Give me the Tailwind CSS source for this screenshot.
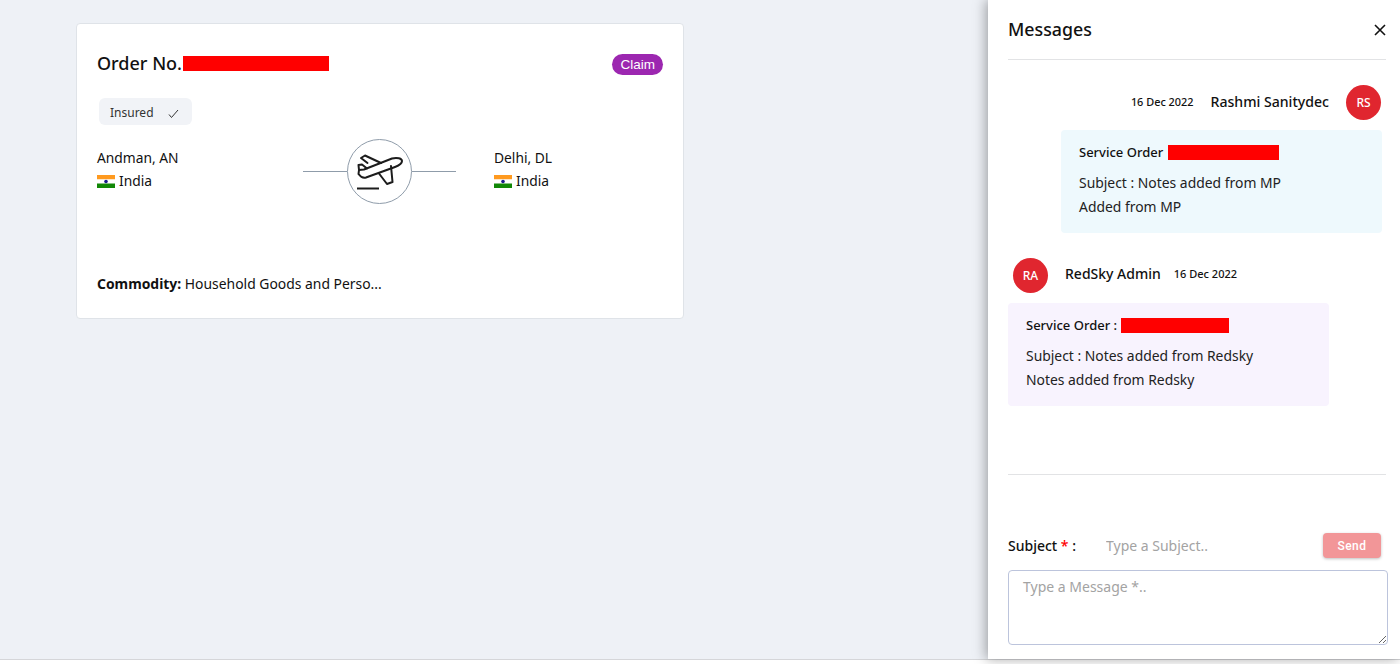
<!DOCTYPE html>
<html lang="en">
<head>
  <meta charset="UTF-8" />
  <meta name="viewport" content="width=device-width, initial-scale=1.0" />
  <title>Order messages</title>
  <script src="https://cdn.jsdelivr.net/npm/@tailwindcss/browser@4"></script>
</head>
<body class="h-[664px] overflow-hidden bg-white font-['Noto_Sans',sans-serif] text-[#111]">
  <div class="h-[660px] flex justify-between bg-[#eef1f6] border-b border-[#d5d6d9]">
    <main class="pl-[76px] pt-[23px]">
      <div class="w-[608px] h-[296px] bg-white border border-[#dfe3e8] rounded pl-5 pr-5 pt-[28px]">
        <div class="flex items-center justify-between h-6">
          <div class="flex items-center mb-[2px]">
            <h2 class="text-[18px] font-medium leading-6">Order No.</h2>
            <span class="w-[146px] h-[15px] bg-[#ff0000] ml-px"></span>
          </div>
          <span class="bg-[#9c27b0] text-white text-[13.5px] leading-[21px] px-[8px] rounded-full font-['Liberation_Sans',sans-serif]">Claim</span>
        </div>
        <div class="mt-[22px] ml-[2px] w-[93px] h-[27px] bg-[#f1f3f7] rounded-md flex items-center pl-[11px] pt-[2px] text-xs text-[#333]">
          Insured
          <svg class="ml-[14px] mt-[2px]" width="11" height="10" viewBox="0 0 11 10" fill="none" stroke="#333" stroke-width="1"><path d="M1 5.5 L3.5 8.5 L10 1"/></svg>
        </div>
        <div class="flex mt-[14px]">
          <div class="w-[206px] text-[13.8px]">
            <div class="h-[20px] leading-5 mt-[9px]">Andman, AN</div>
            <div class="flex items-center mt-[3px] h-5">
              <svg width="18" height="13" viewBox="0 0 18 13"><rect width="18" height="4.5" fill="#ff9a1f"/><rect y="4.5" width="18" height="4" fill="#fff"/><rect y="8.5" width="18" height="4.5" fill="#128807"/><circle cx="9" cy="6.5" r="1.8" fill="#1a1a8c"/></svg>
              <span class="ml-1">India</span>
            </div>
          </div>
          <div class="w-[153px] h-[65px] flex items-center">
            <span class="flex-1 h-px bg-[#8f9caa]"></span>
            <div class="w-[65px] h-[65px] rounded-full border border-[#8f9caa] flex items-center justify-center shrink-0">
              <svg width="49" height="39" viewBox="355 152 49 39" fill="none" stroke="#1c1c1c" stroke-width="2" stroke-linejoin="round" stroke-linecap="round">
                <path d="M359 170 L364 169.5 L392 158.5 C397 157 402 158.5 402 161 C402 163.5 399 165.5 395 167 L366 177.5 C363 178.5 360 176 358.5 174 Z"/>
                <path d="M359 170 L358.5 165 L362 164.5 L367 168.5"/>
                <path d="M367.5 163 L361 158 L365 155.5 L381 163"/>
                <path d="M379 173.5 L387 184 L392.5 182 L391 166"/>
                <path d="M357 188.5 H379" stroke-linecap="butt"/>
              </svg>
            </div>
            <span class="flex-1 h-px bg-[#8f9caa]"></span>
          </div>
          <div class="ml-[38px] text-[13.8px]">
            <div class="h-[20px] leading-5 mt-[9px]">Delhi, DL</div>
            <div class="flex items-center mt-[3px] h-5">
              <svg width="18" height="13" viewBox="0 0 18 13"><rect width="18" height="4.5" fill="#ff9a1f"/><rect y="4.5" width="18" height="4" fill="#fff"/><rect y="8.5" width="18" height="4.5" fill="#128807"/><circle cx="9" cy="6.5" r="1.8" fill="#1a1a8c"/></svg>
              <span class="ml-1">India</span>
            </div>
          </div>
        </div>
        <p class="mt-[70px] text-[13.9px] leading-5"><b class="font-bold">Commodity:</b> Household Goods and Perso...</p>
      </div>
    </main>

    <aside class="w-[412px] h-full bg-white shadow-[-2px_0_12px_rgba(0,0,0,0.35)] pl-5 flex flex-col">
      <div class="w-[405px] flex flex-col">
        <header class="w-[378px] h-[60px] flex items-center justify-between border-b border-[#e2e3e5]">
          <h2 class="text-[17.8px] font-medium mb-[1px]">Messages</h2>
          <svg width="12" height="12" viewBox="0 0 12 12" stroke="#111" stroke-width="1.6"><path d="M1 1 L11 11 M11 1 L1 11"/></svg>
        </header>

        <section class="w-[374px] flex flex-col items-end mt-[25px]">
          <div class="flex items-center h-[35px] pr-[1px]">
            <span class="text-[10.9px] font-medium">16 Dec 2022</span>
            <span class="text-[14.1px] font-medium ml-[17px] mb-[2px]">Rashmi Sanitydec</span>
            <span class="w-[35px] h-[35px] rounded-full bg-[#e0262f] text-white text-xs font-medium flex items-center justify-center ml-[17px]">RS</span>
          </div>
          <div class="w-[321px] h-[103px] bg-[#eef9fd] rounded mt-[10px] pl-[18px] pt-[12px] text-[13.9px] leading-6">
            <div class="flex items-center text-[13px] font-medium h-5">Service Order <span class="w-[111px] h-[15px] bg-[#ff0000] ml-[5px]"></span></div>
            <p class="mt-[9px] text-[#222]">Subject : Notes added from MP</p>
            <p class="text-[#222]">Added from MP</p>
          </div>
        </section>

        <section class="w-[321px] mt-[25px]">
          <div class="flex items-center h-[35px] pl-[5px]">
            <span class="w-[35px] h-[35px] rounded-full bg-[#e0262f] text-white text-xs font-medium flex items-center justify-center">RA</span>
            <span class="text-sm font-medium ml-[17px] mb-[3px]">RedSky Admin</span>
            <span class="text-[11px] font-medium ml-[13px] mb-[2px]">16 Dec 2022</span>
          </div>
          <div class="h-[103px] bg-[#f8f3fe] rounded mt-[10px] pl-[18px] pt-[12px] text-[13.9px] leading-6">
            <div class="flex items-center text-[13px] font-medium h-5">Service Order : <span class="w-[108px] h-[15px] bg-[#ff0000] ml-[4px]"></span></div>
            <p class="mt-[9px] text-[#222]">Subject : Notes added from Redsky</p>
            <p class="text-[#222]">Notes added from Redsky</p>
          </div>
        </section>

        <div class="w-[378px] h-px bg-[#e2e3e5] mt-[68px]"></div>

        <form class="mt-[57px]">
          <div class="w-[373px] flex items-center h-[26px]">
            <label class="text-sm font-medium w-[98px] mt-[2px]">Subject <span class="text-[#ff0000]">*</span> :</label>
            <input class="flex-1 text-sm outline-none mt-[2px] placeholder:text-[#a3a3a3]" placeholder="Type a Subject.." />
            <button type="button" class="w-[58px] h-[25px] pt-px bg-[#f29698] rounded text-white text-xs font-medium font-['Roboto',sans-serif] tracking-[0.5px] shadow-[0_1px_3px_rgba(0,0,0,0.25)]">Send</button>
          </div>
          <textarea class="block w-[380px] h-[75px] mt-[12px] border border-[#bcc4dc] rounded px-[14px] py-[6px] text-sm outline-none placeholder:text-[#a3a3a3]" placeholder="Type a Message *.."></textarea>
        </form>
      </div>
    </aside>
  </div>
</body>
</html>
